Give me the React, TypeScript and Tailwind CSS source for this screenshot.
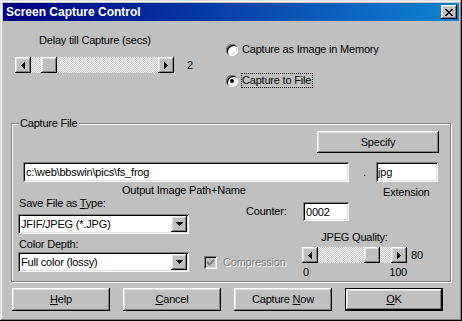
import React from "react";

// classic 3D bevels
const raised =
  "shadow-[inset_-1px_-1px_0_#000,inset_1px_1px_0_#fff,inset_-2px_-2px_0_#808080,inset_2px_2px_0_#dfdfdf]";
const sunken =
  "shadow-[inset_1px_1px_0_#808080,inset_-1px_-1px_0_#fff,inset_2px_2px_0_#000,inset_-2px_-2px_0_#dfdfdf]";

function ScrollBtn({ dir }: { dir: "left" | "right" }) {
  return (
    <div className={`w-[16px] h-[16px] shrink-0 bg-[#c0c0c0] flex items-center justify-center ${raised}`}>
      <svg width="4" height="7" viewBox="0 0 4 7" shapeRendering="crispEdges">
        {dir === "left" ? (
          <path d="M0 3h1v1H0zM1 2h1v3H1zM2 1h1v5H2zM3 0h1v7H3z" fill="#000" />
        ) : (
          <path d="M0 0h1v7H0zM1 1h1v5H1zM2 2h1v3H2zM3 3h1v1H3z" fill="#000" />
        )}
      </svg>
    </div>
  );
}

function Slider({ trackClass, thumbClass }: { trackClass: string; thumbClass: string }) {
  return (
    <div className="flex h-[16px] shrink-0">
      <ScrollBtn dir="left" />
      <div
        className={`h-[16px] bg-[repeating-conic-gradient(#fff_0_25%,#c0c0c0_0_50%)] bg-[length:2px_2px] ${trackClass}`}
      >
        <div className={`w-[16px] h-[16px] bg-[#c0c0c0] ${raised} ${thumbClass}`} />
      </div>
      <ScrollBtn dir="right" />
    </div>
  );
}

function Combo({ value }: { value: string }) {
  return (
    <div className={`w-[171px] h-[20px] shrink-0 bg-white flex items-center pr-[2px] ${sunken}`}>
      <span className="flex-1 pl-[3px] whitespace-nowrap">{value}</span>
      <div className={`w-[16px] h-[16px] bg-[#c0c0c0] flex items-center justify-center ${raised}`}>
        <svg width="7" height="4" viewBox="0 0 7 4" shapeRendering="crispEdges">
          <path d="M0 0h7v1H0zM1 1h5v1H1zM2 2h3v1H2zM3 3h1v1H3z" fill="#000" />
        </svg>
      </div>
    </div>
  );
}

function Radio({ checked }: { checked?: boolean }) {
  return (
    <div className="w-[12px] h-[12px] shrink-0 rounded-full bg-white flex items-center justify-center shadow-[inset_1px_1px_0_#808080,inset_-1px_-1px_0_#fff,inset_2px_2px_0_#000,inset_-2px_-2px_0_#dfdfdf]">
      {checked && <div className="w-[4px] h-[4px] rounded-full bg-black" />}
    </div>
  );
}

function Btn({
  children,
  isDefault,
  className = "h-[23px]",
}: {
  children: React.ReactNode;
  isDefault?: boolean;
  className?: string;
}) {
  return (
    <div
      className={`bg-[#c0c0c0] flex items-center justify-center ${
        isDefault ? "border border-black" : ""
      } ${raised} ${className}`}
    >
      {children}
    </div>
  );
}

export default function App() {
  return (
    <div className="w-[462px] h-[321px] bg-[#c0c0c0] p-[3px] flex flex-col font-['Liberation_Sans',Arial,sans-serif] text-[11px] leading-[13px] tracking-[-0.2px] text-black shadow-[inset_-1px_-1px_0_#000,inset_1px_1px_0_#dfdfdf,inset_-2px_-2px_0_#808080,inset_2px_2px_0_#fff]">
      {/* title bar */}
      <div className="h-[18px] flex items-center justify-between pl-[3px] pr-[2px] bg-[linear-gradient(to_right,#000080,#1084d0)]">
        <span className="text-white font-bold text-[12px] tracking-normal">Screen Capture Control</span>
        <div className={`w-[16px] h-[14px] bg-[#c0c0c0] flex items-center justify-center ${raised}`}>
          <svg width="8" height="7" viewBox="0 0 8 7" shapeRendering="crispEdges">
            <path
              d="M0 0h2v1H0zM6 0h2v1H6zM1 1h2v1H1zM5 1h2v1H5zM2 2h4v1H2zM3 3h2v1H3zM2 4h4v1H2zM1 5h2v1H1zM5 5h2v1H5zM0 6h2v1H0zM6 6h2v1H6z"
              fill="#000"
            />
          </svg>
        </div>
      </div>

      {/* delay + capture mode */}
      <div className="h-[102px] flex">
        <div className="w-[223px] pl-[12px] pt-[13px]">
          <div className="pl-[24px]">Delay till Capture (secs)</div>
          <div className="mt-[10px] flex items-center">
            <Slider trackClass="w-[127px]" thumbClass="ml-[10px]" />
            <span className="ml-[13px]">2</span>
          </div>
        </div>
        <div className="pt-[21px]">
          <div className="h-[15px] flex items-center">
            <Radio />
            <span className="ml-[3px] border border-transparent pr-[1px]">Capture as Image in Memory</span>
          </div>
          <div className="mt-[16px] h-[15px] flex items-center">
            <Radio checked />
            <span className="ml-[3px] border border-dotted border-black pr-[1px]">Capture to File</span>
          </div>
        </div>
      </div>

      {/* capture file group */}
      <div className="relative ml-[8px] w-[440px] h-[159px] border border-[#808080] shadow-[inset_1px_1px_0_#fff,1px_1px_0_#fff]">
        <span className="absolute left-[7px] -top-[7px] bg-[#c0c0c0] px-[1px]">Capture File</span>

        <div className="mt-[7px] flex justify-end pr-[11px]">
          <Btn className="w-[122px] h-[22px]">Specify</Btn>
        </div>

        <div className="mt-[9px] h-[20px] flex items-center">
          <input
            readOnly
            defaultValue="c:\web\bbswin\pics\fs_frog"
            className={`ml-[11px] w-[326px] h-[20px] bg-white pl-[3px] outline-none ${sunken}`}
          />
          <span className="w-[27px] pl-[14px]">.</span>
          <input
            readOnly
            defaultValue="jpg"
            className={`w-[62px] h-[20px] bg-white pl-[2px] outline-none ${sunken}`}
          />
        </div>

        <div className="mt-[2px] h-[13px] flex items-start">
          <span className="ml-[110px] w-[261px]">Output Image Path+Name</span>
          <span className="mt-[2px]">Extension</span>
        </div>

        <div className="flex">
          <div className="ml-[6px] w-[228px]">
            <div className="pl-[1px]">
              Save File as <span className="underline">T</span>ype:
            </div>
            <div className="mt-[4px]">
              <Combo value="JFIF/JPEG (*.JPG)" />
            </div>
            <div className="mt-[4px] pl-[1px]">Color Depth:</div>
            <div className="mt-[1px] flex items-center">
              <Combo value="Full color (lossy)" />
              <div className="ml-[15px] w-[13px] h-[13px] shrink-0 bg-[#c0c0c0] flex items-center justify-center shadow-[inset_1px_1px_0_#808080,inset_-1px_-1px_0_#fff,inset_2px_2px_0_#000,inset_-2px_-2px_0_#dfdfdf]">
                <svg width="7" height="7" viewBox="0 0 7 7" shapeRendering="crispEdges">
                  <path d="M6 0h1v3H6zM5 1h1v3H5zM4 2h1v3H4zM0 2h1v3H0zM1 3h1v3H1zM2 4h1v3H2zM3 3h1v3H3z" fill="#808080" />
                </svg>
              </div>
              <span className="ml-[6px] whitespace-nowrap text-[#808080] [text-shadow:1px_1px_0_#fff]">
                Compression
              </span>
            </div>
          </div>

          <div>
            <div className="mt-[5px] h-[19px] flex items-center">
              <span className="w-[57px]">Counter:</span>
              <input
                readOnly
                defaultValue="0002"
                className={`w-[46px] h-[19px] bg-white pl-[3px] outline-none ${sunken}`}
              />
            </div>
            <div className="mt-[10px] ml-[56px]">
              <div className="w-[105px] text-center">JPEG Quality:</div>
              <div className="mt-[3px] flex items-center">
                <Slider trackClass="w-[73px]" thumbClass="ml-[46px]" />
                <span className="ml-[4px]">80</span>
              </div>
              <div className="mt-[3px] w-[105px] flex justify-between pl-[1px]">
                <span>0</span>
                <span>100</span>
              </div>
            </div>
          </div>
        </div>
      </div>

      {/* buttons */}
      <div className="mt-[6px] ml-[9px] flex gap-[13px]">
        <Btn className="w-[98px] h-[23px]">
          <span>
            <span className="underline">H</span>elp
          </span>
        </Btn>
        <Btn className="w-[98px] h-[23px]">
          <span>
            <span className="underline">C</span>ancel
          </span>
        </Btn>
        <Btn className="w-[98px] h-[23px]">
          <span>
            Capture <span className="underline">N</span>ow
          </span>
        </Btn>
        <Btn isDefault className="w-[98px] h-[23px]">
          <span>
            <span className="underline">O</span>K
          </span>
        </Btn>
      </div>
    </div>
  );
}
